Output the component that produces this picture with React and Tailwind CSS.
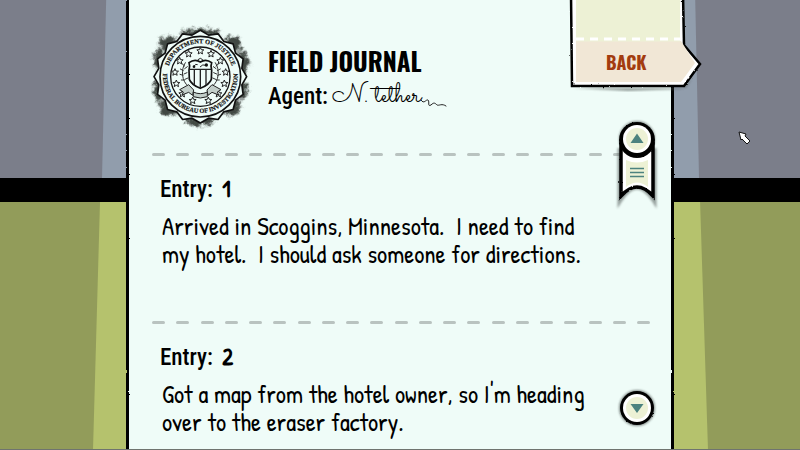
import React from "react";

const entries = [
  {
    id: 1,
    text: "Arrived in Scoggins, Minnesota.  I need to find\nmy hotel.  I should ask someone for directions.",
  },
  {
    id: 2,
    text: "Got a map from the hotel owner, so I'm heading\nover to the eraser factory.",
  },
];

const CX = 181;
const CY = 182;

const polar = (r, deg) => {
  const a = (deg * Math.PI) / 180;
  return [(CX + r * Math.cos(a)).toFixed(1), (CY + r * Math.sin(a)).toFixed(1)];
};

const burst = (outer, inner, count) => {
  const pts = [];
  for (let i = 0; i < count * 2; i++) {
    pts.push(polar(i % 2 ? inner : outer, -90 + (i * 180) / count).join(","));
  }
  return pts.join(" ");
};

const starPoints = (x, y, r) => {
  const pts = [];
  for (let i = 0; i < 10; i++) {
    const a = ((-90 + i * 36) * Math.PI) / 180;
    const rr = i % 2 ? r * 0.45 : r;
    pts.push(`${(x + rr * Math.cos(a)).toFixed(1)},${(y + rr * Math.sin(a)).toFixed(1)}`);
  }
  return pts.join(" ");
};

const stars = [
  [119, 135], [146, 114], [181, 105], [213, 114], [241, 135],
  [105, 169], [257, 169], [109, 203], [253, 203],
  [127, 234], [235, 234], [158, 254], [205, 254],
];

const smudges = [
  [85, 82, 30, 22], [58, 130, 18, 30], [58, 220, 18, 34], [92, 274, 36, 26], [180, 306, 46, 24],
  [272, 272, 30, 26], [302, 222, 20, 26], [308, 140, 18, 36], [278, 86, 26, 26], [181, 50, 60, 12],
];

// shared filters for the hand inked edges
const Ink = () => (
  <svg className="absolute size-0" aria-hidden="true">
    <filter id="ink" x="-20%" y="-20%" width="140%" height="140%">
      <feTurbulence type="fractalNoise" baseFrequency="0.35" numOctaves="2" seed="4" />
      <feDisplacementMap in="SourceGraphic" scale="2" xChannelSelector="R" yChannelSelector="G" />
    </filter>
    <filter id="edge" filterUnits="userSpaceOnUse" x="-4" y="-4" width="2000" height="2000">
      <feTurbulence type="fractalNoise" baseFrequency="0.3" numOctaves="2" seed="9" />
      <feDisplacementMap in="SourceGraphic" scale="2" xChannelSelector="R" yChannelSelector="G" />
    </filter>
    <filter id="smudge" x="-40%" y="-40%" width="180%" height="180%">
      <feGaussianBlur stdDeviation="5" result="b" />
      <feTurbulence type="fractalNoise" baseFrequency="0.06" numOctaves="3" seed="2" result="n" />
      <feDisplacementMap in="b" in2="n" scale="26" xChannelSelector="R" yChannelSelector="G" />
    </filter>
    <filter id="soft" x="-30%" y="-30%" width="160%" height="160%">
      <feGaussianBlur stdDeviation="1" />
    </filter>
  </svg>
);

const Seal = () => (
  <svg viewBox="0 0 360 360" className="size-[120px] shrink-0" role="img" aria-label="Department of Justice seal">
    <g filter="url(#smudge)" fill="#151a18" opacity="0.8">
      {smudges.map(([x, y, rx, ry]) => (
        <ellipse key={`${x}-${y}`} cx={x} cy={y} rx={rx} ry={ry} />
      ))}
    </g>
    <polygon points={burst(139, 127, 16)} fill="#effcf8" stroke="#111" strokeWidth="5" strokeLinejoin="round" />
    <circle cx={CX} cy={CY} r="121" fill="#effcf8" stroke="#111" strokeWidth="5" />
    <circle cx={CX} cy={CY} r="89" fill="none" stroke="#111" strokeWidth="4" />
    <path id="arcTop" d="M 83 162 A 100 100 0 0 1 279 162" fill="none" />
    <path id="arcBottom" d="M 70 164 A 112 112 0 1 0 292 164" fill="none" />
    <g fill="#111" stroke="#111" strokeWidth="0.6" className="font-['Liberation_Serif',serif] font-bold">
      <text fontSize="19">
        <textPath href="#arcTop" startOffset="50%" textAnchor="middle">DEPARTMENT OF JUSTICE</textPath>
      </text>
      <text fontSize="19">
        <textPath href="#arcBottom" startOffset="50%" textAnchor="middle">FEDERAL BUREAU OF INVESTIGATION</textPath>
      </text>
    </g>
    <g fill="#effcf8" stroke="#222" strokeWidth="3">
      {stars.map(([x, y]) => (
        <polygon key={`${x}-${y}`} points={starPoints(x, y, 11)} />
      ))}
    </g>
    <g fill="none" stroke="#333" strokeWidth="3" strokeLinecap="round">
      <path d="M146 212 C124 196 122 160 136 140 M134 150 l-7 -6 M130 164 l-9 -5 M129 178 l-9 -3 M133 192 l-9 0 M134 158 l8 -6 M132 174 l9 -4 M135 190 l9 -4" />
      <path d="M216 212 C238 196 240 160 226 140 M228 150 l7 -6 M232 164 l9 -5 M233 178 l9 -3 M229 192 l9 0 M228 158 l-8 -6 M230 174 l-9 -4 M227 190 l-9 -4" />
    </g>
    <g stroke="#222" strokeWidth="3" strokeLinejoin="round">
      <path d="M119 221 L146 206 L161 222 L158 238 L146 229 L126 237 L130 228 Z" fill="#c3cfca" />
      <path d="M243 221 L216 206 L201 222 L204 238 L216 229 L236 237 L232 228 Z" fill="#c3cfca" />
      <path d="M160 228 Q181 238 202 228 L202 242 Q181 250 160 242 Z" fill="#c3cfca" />
    </g>
    <path d="M174 131 q7 -8 14 0 v8 h-14 z" fill="#effcf8" stroke="#222" strokeWidth="3" />
    <path d="M147 140 Q164 127 181 138 Q198 127 215 140 Q211 150 215 162 L214 190 Q208 206 181 217 Q154 206 148 190 L147 162 Q151 150 147 140 Z" fill="#effcf8" stroke="#111" strokeWidth="5" />
    <path d="M147 160 H215 M163 160 V207 M181 160 V215 M198 160 V207" stroke="#222" strokeWidth="4" fill="none" />
    <path d="M162 151 q4 -9 11 -5 M180 153 q9 -10 16 -5" stroke="#222" strokeWidth="3" fill="none" />
    <circle cx="162" cy="152" r="4" fill="#111" />
    <circle cx="199" cy="147" r="5" fill="#111" />
  </svg>
);

const DashedRule = () => (
  <div className="flex justify-between" aria-hidden="true">
    {Array.from({ length: 21 }, (_, i) => (
      <span key={i} className="h-[3px] w-[13px] rounded-full bg-[#b9c3c0]" />
    ))}
  </div>
);

const Backdrop = ({ side }) => {
  const left = side === "left";
  return (
    <div className="flex flex-col">
      <div className={left ? "flex h-[178px] justify-end bg-[#7b7e8a]" : "flex h-[178px] bg-[#7b7e8a]"}>
        <div
          className={
            left
              ? "w-[26px] bg-[#919dac] [clip-path:polygon(16%_0,100%_0,100%_100%,0_100%)]"
              : "w-[27px] bg-[#919dac] [clip-path:polygon(0_0,86%_0,100%_100%,0_100%)]"
          }
        />
      </div>
      <div className="h-6 bg-black" />
      <div className={left ? "flex flex-1 justify-end bg-[#929c5a]" : "flex flex-1 bg-[#929c5a]"}>
        <div
          className={
            left
              ? "w-[35px] bg-[#b5c26d] [clip-path:polygon(20%_0,100%_0,100%_100%,0_100%)]"
              : "w-[36px] bg-[#b5c26d] [clip-path:polygon(0_0,78%_0,100%_100%,0_100%)]"
          }
        />
      </div>
    </div>
  );
};

const BackButton = () => (
  <button type="button" className="absolute top-0 -right-[30px] h-[92px] w-[134px]">
    <svg viewBox="0 0 134 92" className="absolute inset-0 size-full" aria-hidden="true">
      <path d="M5 88 L118 88 L124 78 L114 89 L60 91 Z" fill="#59625f" opacity="0.6" filter="url(#soft)" />
      <g filter="url(#ink)">
        <path d="M3 -6 L4 86 L116 86 L132 64 L116 45 L115 -6 Z" fill="#fff" stroke="#000" strokeWidth="2.5" />
      </g>
      <path d="M8 0 H112 V38 H8 Z" fill="#edf1d5" />
      <path d="M8 41 H113 L127 63 L113 82 H8 Z" fill="#f1e7d6" />
      <path d="M8 39 H112" stroke="#edf1d5" strokeWidth="5" />
      <path d="M8 39 H114" stroke="#fff" strokeWidth="3" strokeDasharray="8 6" />
    </svg>
    <span className="absolute top-[48px] left-[38px] font-['Oswald','Roboto_Condensed',sans-serif] text-[18px] leading-7 font-bold text-[#a33c10]">
      BACK
    </span>
  </button>
);

const ScrollHandle = () => (
  <button type="button" aria-label="Scroll up" className="absolute top-[116px] right-[13px] h-[90px] w-11">
    <svg viewBox="0 0 44 90" className="size-full overflow-visible">
      <path d="M5 32 V84 Q22 58 39 84 V32" fill="none" stroke="#3c4442" strokeWidth="5" opacity="0.5" filter="url(#soft)" />
      <circle cx="22" cy="23" r="18" fill="#3c4442" opacity="0.6" filter="url(#soft)" />
      <g filter="url(#ink)">
        <path d="M6 28 V80 Q22 62 38 80 V28 Z" fill="#fff" stroke="#000" strokeWidth="3.5" />
        <circle cx="22" cy="24" r="18" fill="#000" />
      </g>
      <path d="M11 44 Q22 49 33 44 V71 Q22 62 11 71 Z" fill="#edf1d5" />
      <circle cx="22" cy="23" r="14" fill="#fff" />
      <circle cx="22" cy="23" r="11" fill="#edf1d5" />
      <path d="M22 17.5 L28.5 27 H15.5 Z" fill="#4c827f" />
      <path d="M15 52.5 H29 M15 56.5 H29 M15 60.5 H29" stroke="#4c827f" strokeWidth="1.5" />
    </svg>
  </button>
);

const ScrollDown = () => (
  <button type="button" aria-label="Scroll down" className="absolute top-[386px] right-[13px] size-11">
    <svg viewBox="0 0 44 44" className="size-full">
      <circle cx="22" cy="22" r="18" fill="#3c4442" opacity="0.6" filter="url(#soft)" />
      <circle cx="22" cy="22" r="17" fill="#000" filter="url(#ink)" />
      <circle cx="22" cy="22" r="14" fill="#fff" />
      <circle cx="22" cy="22" r="11" fill="#edf1d5" />
      <path d="M22 27 L28.5 18 H15.5 Z" fill="#4c827f" />
    </svg>
  </button>
);

const App = () => {
  return (
    <div className="relative grid min-h-screen grid-cols-[16%_1fr_16%] overflow-hidden bg-black font-['Roboto_Condensed','Open_Sans_Condensed',Roboto,sans-serif] text-black">
      <Ink />
      <Backdrop side="left" />

      <main className="relative z-10 bg-[#effcf8]">
        <div className="absolute inset-y-0 -left-[2px] w-[3px] bg-black [filter:url(#edge)]" />
        <div className="absolute inset-y-0 -right-[2px] w-[3px] bg-black [filter:url(#edge)]" />

        <div className="pr-[22px] pl-6">
          <header className="flex h-[153px] items-start pt-4">
            <div className="-ml-3">
              <Seal />
            </div>
            <div className="pt-[29px] pl-2">
              <h1 className="font-['Oswald','Roboto_Condensed',sans-serif] text-[25px] leading-8 font-bold">FIELD JOURNAL</h1>
              <p className="mt-1 flex items-center text-[23px] leading-8 font-medium">
                Agent:
                <span className="pl-1 font-['Sacramento','Caveat',cursive] text-[28px] font-normal">N. tether</span>
                <svg viewBox="0 0 26 12" className="mt-3 h-3 w-[26px]" fill="none" stroke="#222" strokeLinecap="round" aria-hidden="true">
                  <path d="M0 3 C3 8 5 2 7 3 C9 5 6 10 10 8 C13 5 14 6 16 8 C18 9 21 6 25 9" />
                </svg>
              </p>
            </div>
          </header>

          {entries.map(({ id, text }) => (
            <section key={id} className="pb-[53px] last:pb-0">
              <DashedRule />
              <div className="px-2 pt-[19px]">
                <h2 className="text-[23px] leading-7 font-medium">
                  Entry: <span className="pl-1 font-['Patrick_Hand','Caveat',cursive] font-bold">{id}</span>
                </h2>
                <p className="mt-2 pl-[2px] font-['Patrick_Hand','Shadows_Into_Light','Caveat',cursive] text-[25px] leading-7 whitespace-pre-wrap [font-variant-ligatures:none]">
                  {text}
                </p>
              </div>
            </section>
          ))}
        </div>

        <BackButton />
        <ScrollHandle />
        <ScrollDown />
      </main>

      <Backdrop side="right" />

      {/* mouse pointer */}
      <svg viewBox="0 0 14 14" className="absolute top-[131px] left-[738px] z-20 size-[14px]" aria-hidden="true">
        <path d="M1 1 L8 3 L7 5 L12 10 L9 13 L4 8 L3 9 Z" fill="#fff" stroke="#111" strokeLinejoin="round" />
      </svg>
      <div className="absolute inset-x-0 bottom-0 z-20 h-px bg-[#6f746f]" />
    </div>
  );
};

export default App;
